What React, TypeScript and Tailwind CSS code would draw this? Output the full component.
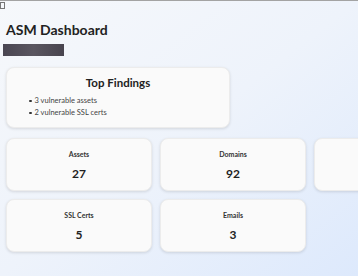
import React from 'react';

const STATS = [
  { label: 'Assets', value: 27 },
  { label: 'Domains', value: 92 },
  { label: '', value: null },
  { label: 'SSL Certs', value: 5 },
  { label: 'Emails', value: 3 },
];

const FINDINGS = ['3 vulnerable assets', '2 vulnerable SSL certs'];

export default function App() {
  return (
    <div
      className="min-h-[276px] w-[358px] overflow-hidden border-t border-[#a3a3a3] bg-gradient-to-br from-[#f6f8fb] via-[#eef3fb] to-[#dde9fc] text-[#222]"
      style={{ fontFamily: 'Lato, "Open Sans", sans-serif' }}
    >
      {/* broken logo placeholder */}
      <div className="h-[9px] pt-[1px]">
        <div className="w-[5px] h-[7px] border border-[#777]" />
      </div>

      <div className="px-[6px]">
        <h1 className="mt-[10px] text-[14px] leading-[20px] font-bold">ASM Dashboard</h1>
        <div className="-ml-[3px] mt-[4px] w-[61px] h-[12px] bg-gradient-to-r from-[#4a4652] via-[#5a5660] to-[#48444e]" />

        <div className="mt-[11px] w-[224px] h-[61px] rounded-[8px] bg-[#fafafa] shadow-[0_1px_3px_rgba(0,0,0,0.12)] border border-[#ececec]">
          <h2 className="text-center text-[11.5px] leading-[16px] font-bold mt-[7px]">Top Findings</h2>
          <ul className="mt-[4px] pl-[22px] text-[7.5px] leading-[12px] text-[#444]">
            {FINDINGS.map(f => (
              <li key={f} className="flex items-center gap-[3px]">
                <span className="w-[2.5px] h-[2.5px] rounded-full bg-[#333]" />
                {f}
              </li>
            ))}
          </ul>
        </div>

        <div className="mt-[10px] grid grid-cols-[146px_146px_146px] gap-[8px]">
          {STATS.map((s, i) => (
            <div
              key={i}
              className="h-[53px] rounded-[8px] bg-[#fafafa] shadow-[0_1px_3px_rgba(0,0,0,0.12)] border border-[#ececec] flex flex-col items-center pt-[9px]"
            >
              {s.value !== null && (
                <>
                  <span className="text-[7px] leading-[12px] font-bold text-[#333]">{s.label}</span>
                  <span className="mt-[6px] text-[12px] leading-[16px] font-bold text-[#222]">{s.value}</span>
                </>
              )}
            </div>
          ))}
        </div>
      </div>
    </div>
  );
}
